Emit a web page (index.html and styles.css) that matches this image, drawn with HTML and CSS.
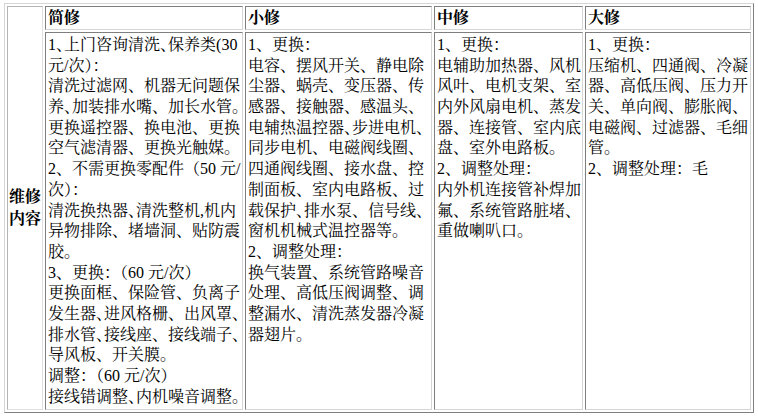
FILE: index.html
```html
<!DOCTYPE html>
<html lang="zh-CN">
<head>
<meta charset="utf-8">
<title>维修内容</title>
<link rel="stylesheet" href="styles.css">
</head>
<body>
<table class="repair">
  <colgroup>
    <col class="c-label"><col class="c-jian"><col class="c-xiao"><col class="c-zhong"><col class="c-da">
  </colgroup>
  <tr class="head">
    <td class="label" rowspan="2"><div class="ln2">维修</div><div class="ln2">内容</div></td>
    <th>简修</th>
    <th>小修</th>
    <th>中修</th>
    <th>大修</th>
  </tr>
  <tr class="content">
    <td>
      <div class="ln">1<span class="h">、</span>上门咨询清洗<span class="h">、</span>保养类(30</div>
      <div class="ln">元/次）：</div>
      <div class="ln">清洗过滤网、机器无问题保</div>
      <div class="ln">养<span class="h">、</span>加装排水嘴、加长水管<span class="h">。</span></div>
      <div class="ln">更换遥控器、换电池、更换</div>
      <div class="ln">空气滤清器、更换光触媒。</div>
      <div class="ln">2、不需更换零配件（50 元/</div>
      <div class="ln">次）：</div>
      <div class="ln">清洗换热器<span class="h">、</span>清洗整机,机内</div>
      <div class="ln">异物排除、堵墙洞、贴防震</div>
      <div class="ln">胶。</div>
      <div class="ln">3、更换：（60 元/次）</div>
      <div class="ln">更换面框、保险管、负离子</div>
      <div class="ln">发生器<span class="h">、</span>进风格栅、出风罩<span class="h">、</span></div>
      <div class="ln">排水管<span class="h">、</span>接线座、接线端子<span class="h">、</span></div>
      <div class="ln">导风板、开关膜。</div>
      <div class="ln">调整：（60 元/次）</div>
      <div class="ln">接线错调整<span class="h">、</span>内机噪音调整<span class="h">。</span></div>
    </td>
    <td>
      <div class="ln">1、更换：</div>
      <div class="ln">电容、摆风开关、静电除</div>
      <div class="ln">尘器、蜗壳、变压器、传</div>
      <div class="ln">感器、接触器、感温头、</div>
      <div class="ln">电辅热温控器<span class="h">、</span>步进电机<span class="h">、</span></div>
      <div class="ln">同步电机、电磁阀线圈、</div>
      <div class="ln">四通阀线圈、接水盘、控</div>
      <div class="ln">制面板、室内电路板、过</div>
      <div class="ln">载保护<span class="h">、</span>排水泵、信号线<span class="h">、</span></div>
      <div class="ln">窗机机械式温控器等。</div>
      <div class="ln">2、调整处理：</div>
      <div class="ln">换气装置、系统管路噪音</div>
      <div class="ln">处理、高低压阀调整、调</div>
      <div class="ln">整漏水、清洗蒸发器冷凝</div>
      <div class="ln">器翅片。</div>
    </td>
    <td>
      <div class="ln">1、更换：</div>
      <div class="ln">电辅助加热器、风机</div>
      <div class="ln">风叶、电机支架、室</div>
      <div class="ln">内外风扇电机、蒸发</div>
      <div class="ln">器、连接管、室内底</div>
      <div class="ln">盘、室外电路板。</div>
      <div class="ln">2、调整处理：</div>
      <div class="ln">内外机连接管补焊加</div>
      <div class="ln">氟、系统管路脏堵、</div>
      <div class="ln">重做喇叭口。</div>
    </td>
    <td>
      <div class="ln">1、更换：</div>
      <div class="ln">压缩机、四通阀、冷凝</div>
      <div class="ln">器、高低压阀、压力开</div>
      <div class="ln">关、单向阀、膨胀阀、</div>
      <div class="ln">电磁阀、过滤器、毛细</div>
      <div class="ln">管。</div>
      <div class="ln">2、调整处理：毛</div>
    </td>
  </tr>
</table>
</body>
</html>
```
FILE: styles.css
```css
html, body {
  margin: 0;
  background: #ffffff;
}
body {
  padding: 3px 0 0 4px;
  font-family: "Liberation Serif", "Noto Serif CJK SC", "Noto Sans CJK SC", serif;
  color: #000000;
}
.repair {
  table-layout: fixed;
  width: 750px;
  border-collapse: separate;
  border-spacing: 2px;
  border: 1px solid;
  border-color: #d6d6d6 #7f7f7f #7f7f7f #d6d6d6;
}
.c-label { width: 36px; }
.c-jian { width: 198px; }
.c-xiao { width: 187px; }
.c-zhong { width: 149px; }
.c-da { width: 166px; }

.repair td,
.repair th {
  border: 1px solid;
  border-color: #7f7f7f #d6d6d6 #d6d6d6 #7f7f7f;
  padding: 2px;
  font-size: 16px;
  line-height: 20.7px;
  white-space: nowrap;
  vertical-align: top;
  text-align: left;
  font-weight: normal;
}
.repair th {
  padding: 1px 2px;
  line-height: 20px;
  vertical-align: middle;
  font-weight: bold;
}
.repair td.label {
  padding: 0;
  text-align: center;
  vertical-align: middle;
  font-weight: bold;
  border-color: #b4b4b4 #e0e0e0 #e0e0e0 #b4b4b4;
}
.ln {
  height: 20.7px;
}
.ln2 {
  height: 22px;
  line-height: 22px;
}
.h {
  font-feature-settings: "halt" 1;
}
```
